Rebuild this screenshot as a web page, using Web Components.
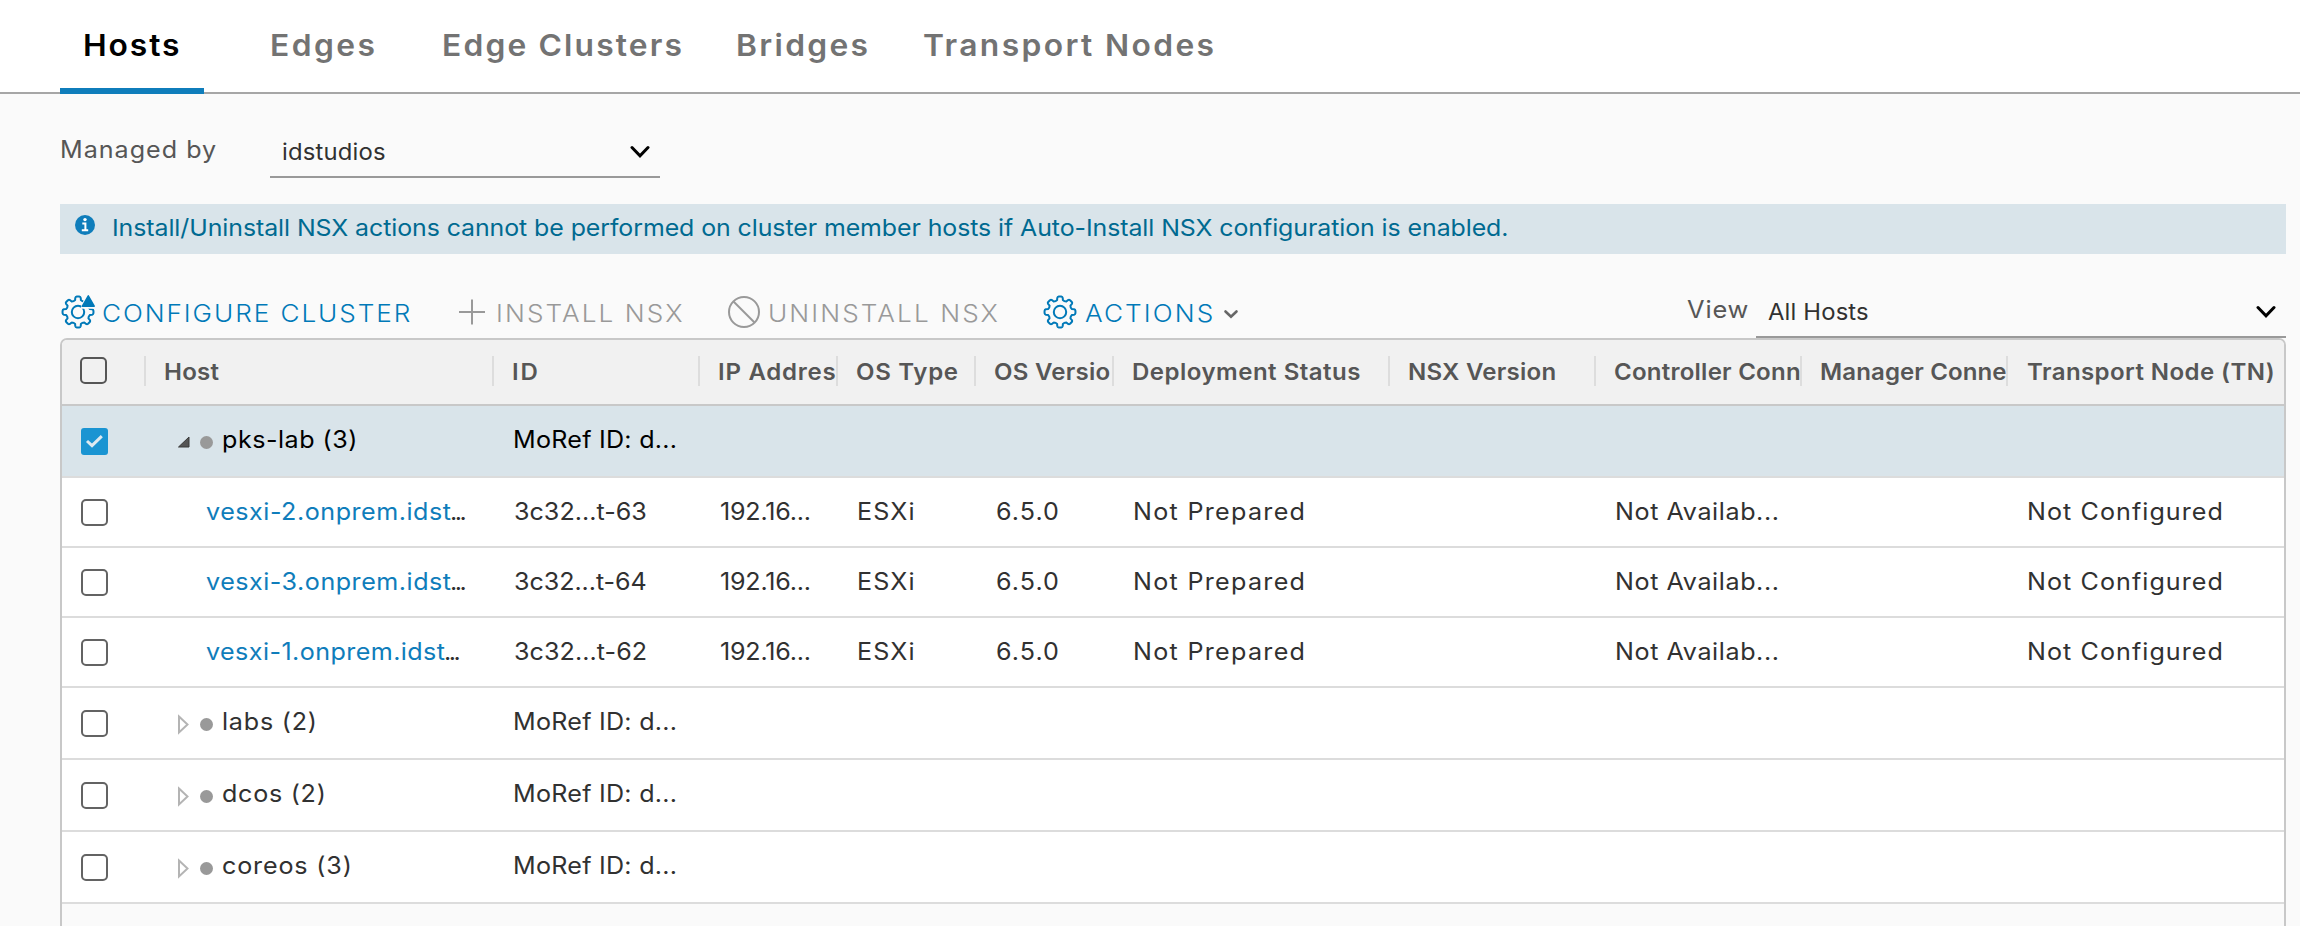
<!DOCTYPE html>
<html lang="en"><head><meta charset="utf-8"><title>Host Transport Nodes</title>
<style>html,body{margin:0;height:100%;overflow:hidden;background:#fafafa}</style></head>
<body><nsx-page></nsx-page>
<script>
const define=(name,html,init)=>customElements.define(name,class extends HTMLElement{
  connectedCallback(){
    if(this.shadowRoot)return;
    this.attachShadow({mode:'open'}).innerHTML=typeof html==='function'?html(this):html;
    if(init)init(this);
  }
});
const ctx=document.createElement('canvas').getContext('2d');

/* One line of slightly widened text, tracked out to the given ink width. */
const STRETCH=1.06;
define('fit-text','<style>:host{display:block;white-space:pre;flex:none;transform-origin:0 0;transform:scaleX('+STRETCH+')}</style><slot></slot>',el=>{
  const s=getComputedStyle(el),t=el.textContent,n=t.length,w=+el.getAttribute('w')-1;
  ctx.font=`${s.fontWeight} ${parseFloat(s.fontSize)*10}px ${s.fontFamily}`;
  const m=ctx.measureText(t);
  const left=m.actualBoundingBoxLeft/10,ink=m.actualBoundingBoxRight/10+left;
  const ls=(w/STRETCH-ink)/(n-1);
  el.style.letterSpacing=ls.toFixed(3)+'px';
  el.style.marginLeft=(left*STRETCH+1).toFixed(2)+'px';
  el.style.marginRight=((STRETCH-1)*(m.width/10+ls*n)).toFixed(2)+'px';
});

define('nsx-tab',el=>`<style>
:host{display:block;box-sizing:border-box;height:94px;padding:15px 24px 0;color:#737373;font-size:30px;font-weight:600;line-height:60px}
:host([active]){color:#000;border-bottom:6px solid #0f7dbb}
</style><fit-text w="${el.getAttribute('w')}">${el.getAttribute('label')}</fit-text>`);

define('nsx-tabs',`<style>
:host{display:block;background:#fff;height:94px;box-shadow:inset 0 -2px #a6a6a6;padding-left:60px}
nav{display:grid;grid-template-columns:187px 172px 294px 186px 400px;justify-items:start}
</style><nav>
<nsx-tab active label="Hosts" w="94.5" style="width:144px"></nsx-tab>
<nsx-tab label="Edges" w="103"></nsx-tab><nsx-tab label="Edge Clusters" w="238"></nsx-tab>
<nsx-tab label="Bridges" w="130"></nsx-tab><nsx-tab label="Transport Nodes" w="290"></nsx-tab></nav>`);

define('nsx-select',el=>`<style>
:host{display:flex;box-sizing:border-box;height:50px;border-bottom:2px solid #999;padding:0 10px 0 12px;justify-content:space-between;color:#313131;font-size:22.5px;line-height:48px}
svg{flex:none;margin-top:14px}
</style><fit-text w="${el.getAttribute('w')}">${el.getAttribute('value')}</fit-text>
<svg width="20" height="20" viewBox="0 0 20 20"><path d="M2 5.5 10 13.8 18 5.5" fill="none" stroke="#000" stroke-width="3" stroke-linecap="round"/></svg>`);

define('nsx-alert',`<style>
:host{display:flex;box-sizing:border-box;height:50px;background:#d9e4ea;color:#006a91;padding-left:15px;font-size:23.5px;line-height:48px}
svg{flex:none;margin:11px 18px 0 0}
</style><svg width="20" height="20" viewBox="0 0 20 20"><circle cx="10" cy="10" r="10" fill="#0f7dbb"/><circle cx="10" cy="4.6" r="1.7" fill="#fff"/><path d="M7.3 8.6H10.4V15M6.8 15.2H13.2" fill="none" stroke="#fff" stroke-width="2"/></svg>
<fit-text w="1393.5">Install/Uninstall NSX actions cannot be performed on cluster member hosts if Auto-Install NSX configuration is enabled.</fit-text>`);

const gearPath=(()=>{
  let d='';
  for(let i=0;i<8;i++){
    const a=i*Math.PI/4-Math.PI/2;
    const p=(r,o)=>(17+r*Math.cos(a+o)).toFixed(2)+' '+(17+r*Math.sin(a+o)).toFixed(2);
    d+=(i?'L':'M')+p(12.2,-.24)+'L'+p(14.4,-.19)+'Q'+p(15.5,-.16)+' '+p(15.5,-.08)+'L'+p(15.5,.08)+'Q'+p(15.5,.16)+' '+p(14.4,.19)+'L'+p(12.2,.24)+'Q'+p(11.2,.39)+' '+p(12.2,.545);
  }
  return d+'Z';
})();
const gear=`<path d="${gearPath}"/><circle cx="17" cy="17" r="6.2"/>`;
const glyphs={
  cluster:`<g fill="none" stroke="#0079b8" stroke-width="2" stroke-linejoin="round">${gear}</g><path d="M19.5 13.8 23 4 27 -2 37 13.8Z" fill="#fafafa"/><path d="M27.3 .8 33.2 11.2H21.4Z" fill="#0079b8" stroke="#0079b8" stroke-width="1.5" stroke-linejoin="round"/>`,
  gear:`<g fill="none" stroke="#0079b8" stroke-width="2" stroke-linejoin="round">${gear}</g>`,
  plus:'<path d="M17 4.5V29.5M4 17H30" fill="none" stroke="#999" stroke-width="2"/>',
  ban:'<g fill="none" stroke="#999" stroke-width="2"><circle cx="17" cy="17" r="15"/><path d="M6.5 6.5 27.5 27.5"/></g>'
};
define('nsx-action',el=>`<style>
:host{display:flex;color:#0079b8;font-size:24.7px;line-height:36px;font-weight:350}
:host([disabled]){color:#999}
svg{flex:none;display:block}
.g{margin-right:8px}
.m{margin-left:7px}
</style><svg class="g" width="34" height="34" viewBox="0 0 34 34">${glyphs[el.getAttribute('icon')]}</svg>
<fit-text w="${el.getAttribute('w')}">${el.getAttribute('label')}</fit-text>
${el.hasAttribute('menu')?'<svg class="m" width="16" height="34" viewBox="0 0 16 34"><path d="M2.5 16.5 8 21.8 13.5 16.5" fill="none" stroke="#666" stroke-width="2.6" stroke-linecap="round"/></svg>':''}`);

define('nsx-toolbar',`<style>
:host{display:flex;height:50px;justify-content:space-between}
.left{display:grid;grid-template-columns:394px 272px 316px 240px;margin-top:7px;padding-left:1px}
.right{display:flex;color:#565656;font-size:24px;line-height:44px}
nsx-select{width:530px;margin-left:7px}
</style><div class="left">
<nsx-action icon="cluster" label="CONFIGURE CLUSTER" w="307"></nsx-action>
<nsx-action disabled icon="plus" label="INSTALL NSX" w="184.5"></nsx-action>
<nsx-action disabled icon="ban" label="UNINSTALL NSX" w="228"></nsx-action>
<nsx-action icon="gear" label="ACTIONS" w="127" menu></nsx-action></div>
<div class="right"><fit-text w="61">View</fit-text><nsx-select value="All Hosts" w="100"></nsx-select></div>`);

define('nsx-checkbox',`<style>
:host{display:block;box-sizing:border-box;width:27px;height:27px;border:2px solid #636363;border-radius:5px;background:#fff}
:host([head]){border-width:2.6px;border-color:#565656;background:none}
:host([checked]){border:0;border-radius:3px;background:#1a94d2}
svg{display:none}:host([checked]) svg{display:block}
</style><svg width="27" height="27" viewBox="0 0 27 27"><path d="M6 13 11 17.6 20.8 8.2" fill="none" stroke="#dde9f0" stroke-width="3"/></svg>`);

const cols='82px 348px 206px 138px 138px 138px 276px 206px 206px 206px 278px';
const heads=[['Host',54],['ID',24],['IP Address',130],['OS Type',101],['OS Versio',115],['Deployment Status',227],['NSX Version',146],['Controller Conn',185],['Manager Conne',185],['Transport Node (TN)',245.5]];
define('nsx-grid-header',`<style>
:host{display:grid;grid-template-columns:${cols};height:64px;background:#f1f1f1;border-bottom:2px solid #c8c8c8;color:#565656;font-size:22.7px;font-weight:600;line-height:64px;border-radius:5px 5px 0 0}
nsx-checkbox{margin:17px 0 0 18px}
.c{overflow:hidden;padding-left:20.5px;background:linear-gradient(#ddd,#ddd) 0 16px/2px 30px no-repeat}
</style><nsx-checkbox head></nsx-checkbox>${heads.map(h=>`<div class="c"><fit-text w="${h[1]}">${h[0]}</fit-text></div>`).join('')}`);

define('nsx-group-name',el=>`<style>
:host{display:flex}svg{flex:none;margin:24px 9px 0 32.5px}i{width:13px;height:13px;border-radius:50%;background:#999;margin:29.5px 10px 0 0}
</style><svg width="14" height="24" viewBox="0 0 14 24">${el.hasAttribute('open')?'<path d="M1.5 17 12 7V17Z" fill="#555" stroke="#3a3a3a" stroke-linejoin="round"/>':'<path d="M2 4.5 10.5 12.5 2 20.5Z" fill="#fff" stroke="#b4b4b4" stroke-width="2"/>'}</svg><i></i>
<fit-text w="${el.getAttribute('w')}">${el.getAttribute('name')}</fit-text>`);

define('nsx-row',el=>{
  const g=el.hasAttribute('group'),[name,w]=el.getAttribute('host').split('|');
  const cell=(t,w)=>`<div class="c">${t?`<fit-text w="${w}">${t}</fit-text>`:''}</div>`;
  const rest=g?cell('MoRef ID: d...',161):cell(el.getAttribute('ref'),131)+cell('192.16...',89)+cell('ESXi',55)+cell('6.5.0',61)+cell('Not Prepared',169)+cell('')+cell('Not Availab...',161)+cell('')+cell('Not Configured',193);
  return `<style>
:host{display:grid;grid-template-columns:${cols};box-sizing:border-box;height:70px;border-bottom:2px solid #dcdcdc;background:#fff;color:#313131;font-size:23.7px;line-height:67px}
:host([group]){height:72px}
:host([selected]){background:#d9e4ea;color:#000}
nsx-checkbox{margin:21px 0 0 19px}
:host([group]) nsx-checkbox{margin-top:22px}
.c{padding-left:22.5px}
.link{display:flex;padding-left:61.5px;color:#0f7dbb}
.dots{color:#313131}
</style><nsx-checkbox ${el.hasAttribute('selected')?'checked':''}></nsx-checkbox>
${g?`<nsx-group-name name="${name}" w="${w}" ${el.hasAttribute('selected')?'open':''}></nsx-group-name>`
:`<div class="link"><fit-text w="${w}">${name}</fit-text><fit-text class="dots" w="14">...</fit-text></div>`}${rest}`;
});

define('nsx-grid',`<style>
:host{display:block;box-sizing:border-box;height:620px;border:2px solid #c8c8c8;border-radius:7px 7px 0 0}
</style><nsx-grid-header></nsx-grid-header>
<nsx-row group selected host="pks-lab (3)|132"></nsx-row>
<nsx-row host="vesxi-2.onprem.idst|245" ref="3c32...t-63"></nsx-row>
<nsx-row host="vesxi-3.onprem.idst|245" ref="3c32...t-64"></nsx-row>
<nsx-row host="vesxi-1.onprem.idst|239" ref="3c32...t-62"></nsx-row>
<nsx-row group host="labs (2)|91.5"></nsx-row>
<nsx-row group host="dcos (2)|101"></nsx-row>
<nsx-row group host="coreos (3)|127"></nsx-row>`);

define('nsx-page',`<style>
:host{display:block;height:926px;overflow:hidden;font-family:Inter,"Open Sans",sans-serif;font-weight:380;background:#fafafa}
main{padding:0 14px 0 60px}
.managed{display:flex;padding-top:34px;height:76px;color:#565656;font-size:23.7px;line-height:43px}
.label{width:209px;padding-left:1px}
nsx-select{width:390px}
nsx-toolbar{margin-top:34px}
</style><nsx-tabs></nsx-tabs><main>
<div class="managed"><div class="label"><fit-text w="154.5">Managed by</fit-text></div><nsx-select value="idstudios" w="102"></nsx-select></div>
<nsx-alert></nsx-alert><nsx-toolbar></nsx-toolbar><nsx-grid></nsx-grid></main>`);
</script></body></html>
